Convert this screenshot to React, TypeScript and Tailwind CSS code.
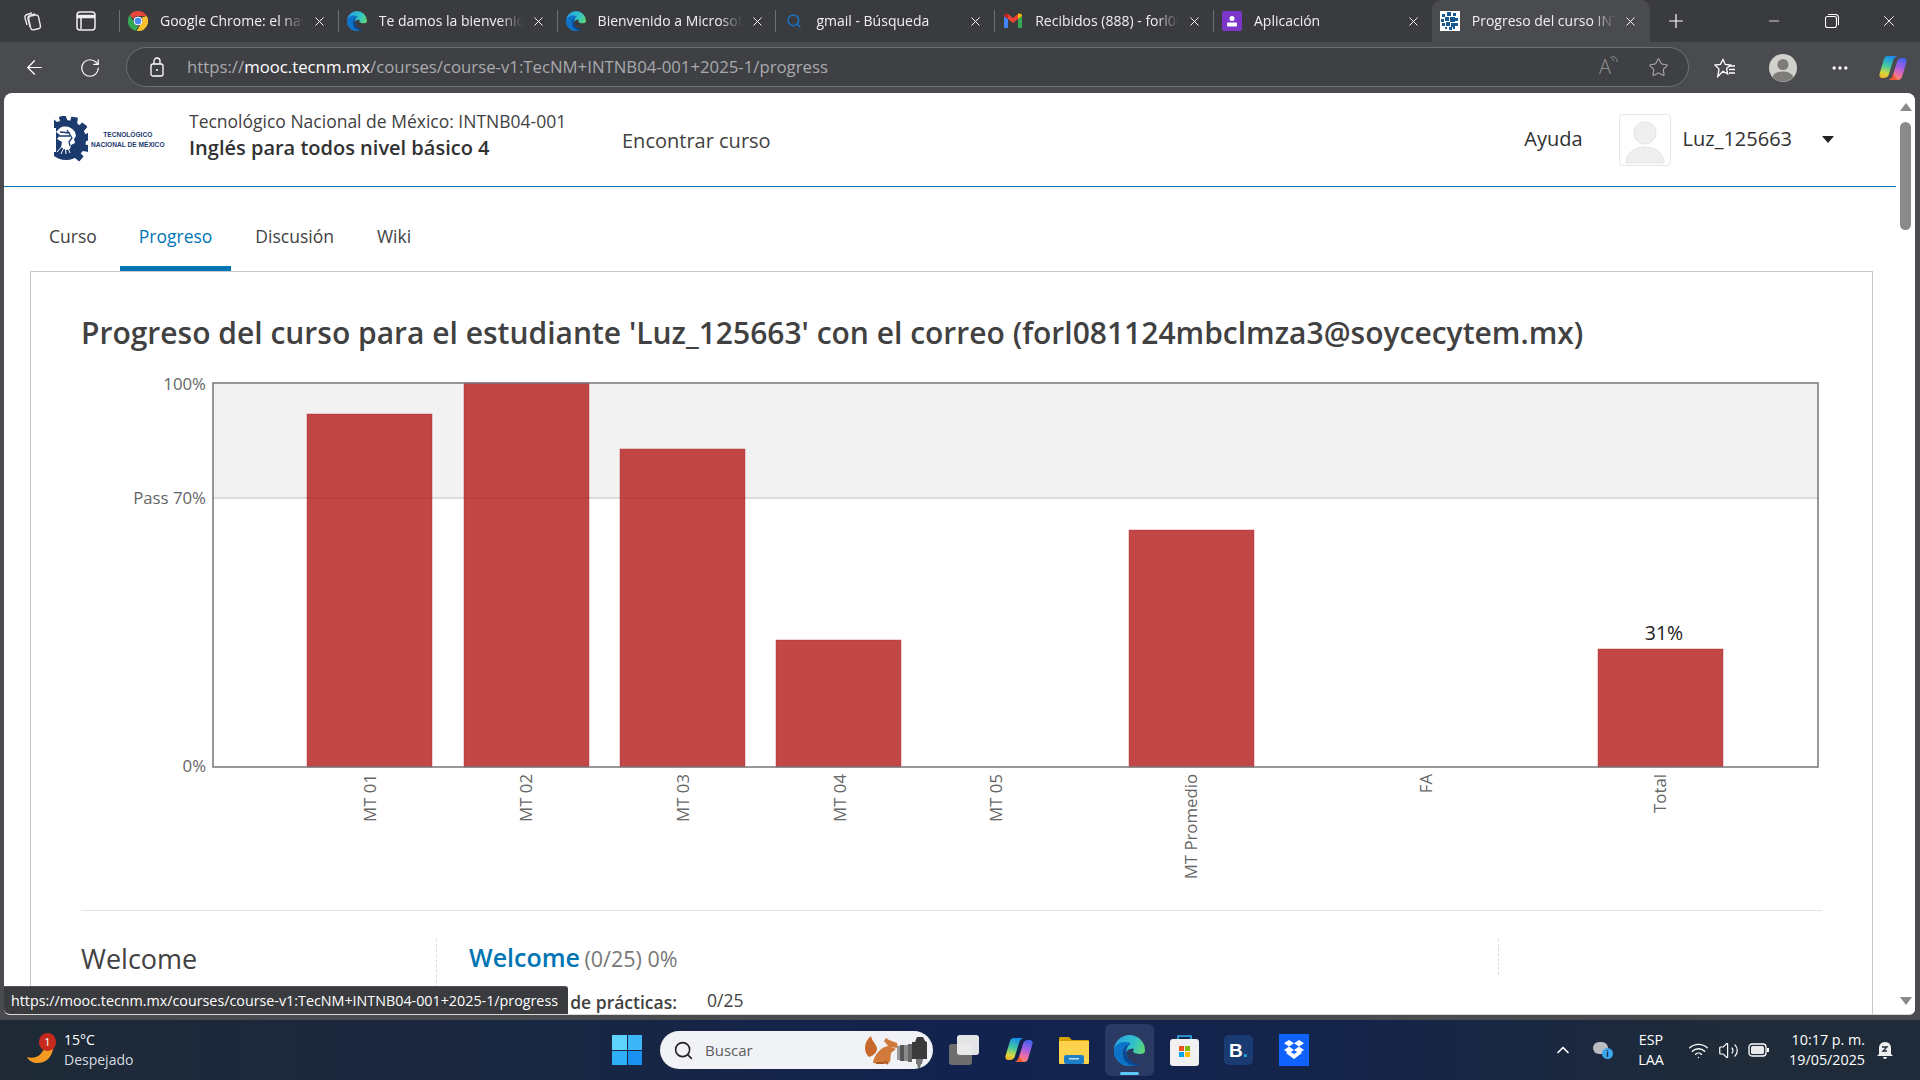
import React from "react";
import { X, Plus, Minus, ArrowLeft, RotateCw, Search, ChevronUp, Wifi, Volume2, Ellipsis, Star } from "lucide-react";

const seg = "font-['Open_Sans','Noto_Sans',sans-serif]";

function ChromeIcon() {
  return (
    <svg width="20" height="20" viewBox="0 0 20 20" className="shrink-0">
      <path d="M10 0a10 10 0 0 1 8.700 5H10a5 5 0 0 0-4.600 3L1.800 4A10 10 0 0 1 10 0z" fill="#e8453c" />
      <path d="M1.800 4l4.400 7.400A5 5 0 0 0 10.500 15L7.800 19.800A10 10 0 0 1 1.800 4z" fill="#34a853" />
      <path d="M18.700 5A10 10 0 0 1 8.600 20l4.400-7.600A5 5 0 0 0 13.600 6.500L18.700 5z" fill="#fbc02d" />
      <circle cx="10" cy="10" r="4" fill="#4a8cf0" stroke="#fff" strokeWidth="1" />
    </svg>
  );
}
function EdgeIcon({ s = 20, bite = "#3a3b3f" }: { s?: number; bite?: string }) {
  return (
    <svg width={s} height={s} viewBox="0 0 24 24" className="shrink-0">
      <defs>
        <linearGradient id="eg" x1="0" y1="0.200" x2="1" y2="0.700">
          <stop offset="0" stopColor="#2a9fe6" />
          <stop offset="0.550" stopColor="#32c3c8" />
          <stop offset="1" stopColor="#6bdc5c" />
        </linearGradient>
      </defs>
      <circle cx="12" cy="12" r="12" fill="url(#eg)" />
      <path d="M24 12.500c0 1-1 2-3.500 2.200-2 .1-4.500-.2-5.500-1.500-.6-.8 0-1.600.6-2.300-2.600-1-6.600.4-6.600 4.600 0 4 4 8.500 10 8.500l5-6z" fill={bite} />
      <path d="M0 12C1 6 8 4 13 6.500c-3 .5-6.500 3-6.500 8 0 4 3 8 8 9-1 .3-2 .5-3 .5C5 24 0 18.500 0 12z" fill="#0d73c9" />
      <path d="M6.500 14.500c0-5 3.500-7.500 6.500-8-2.500 1.500-3.500 4-3.500 6.500 0 5 4 9.500 10 9.800-1.500.8-3 1.200-5 1-5-1-8-5.300-8-9.300z" fill="#0a4a9a" />
    </svg>
  );
}
function GmailIcon() {
  return (
    <svg width="20" height="20" viewBox="0 0 20 20" className="shrink-0">
      <path d="M1 17V5l4 3v9H2a1 1 0 0 1-1-1z" fill="#4285f4" />
      <path d="M19 17V5l-4 3v9h3a1 1 0 0 0 1-1z" fill="#34a853" />
      <path d="M5 8V3l5 4 5-4v5l-5 4z" fill="#ea4335" />
      <path d="M1 5c0-2 2-3 4-2v5z" fill="#c5221f" />
      <path d="M19 5c0-2-2-3-4-2v5z" fill="#fbbc04" />
    </svg>
  );
}
function AppIcon() {
  return (
    <svg width="20" height="20" viewBox="0 0 20 20" className="shrink-0">
      <rect width="20" height="20" rx="2" fill="#7b35c9" />
      <circle cx="10" cy="7.500" r="2.500" fill="#fff" />
      <rect x="5" y="11.500" width="10" height="4" rx="1" fill="#fff" />
    </svg>
  );
}
function TecIcon() {
  const dots = [[3,4,3],[8,2,4],[14,3,3],[2,9,3],[6,7,4],[11,7,5],[16,8,3],[3,13,3],[7,12,4],[12,13,4],[16,13,3],[6,17,2],[10,17,3],[14,17,2]];
  return (
    <svg width="20" height="20" viewBox="0 0 20 20" className="shrink-0">
      <rect width="20" height="20" fill="#fff" />
      {dots.map((d, i) => <rect key={i} x={d[0]-1} y={d[1]-1} width={d[2]} height={d[2]} fill="#16588f" />)}
    </svg>
  );
}
function CopilotIcon({ s = 28 }: { s?: number }) {
  return (
    <svg width={s} height={s} viewBox="0 0 28 28" className="shrink-0">
      <defs>
        <linearGradient id="cp1" x1="0.500" y1="0" x2="0.300" y2="1">
          <stop offset="0" stopColor="#1b8fea" /><stop offset="0.450" stopColor="#45c8a0" /><stop offset="0.800" stopColor="#d8d83a" /><stop offset="1" stopColor="#f3b02a" />
        </linearGradient>
        <linearGradient id="cp2" x1="0.700" y1="0" x2="0.400" y2="1">
          <stop offset="0" stopColor="#3f62ec" /><stop offset="0.400" stopColor="#a45ee6" /><stop offset="0.750" stopColor="#ee6fa0" /><stop offset="1" stopColor="#f68a5a" />
        </linearGradient>
      </defs>
      <path d="M9 2h9c-2.500 1-3.500 3-4 5l-4 13c-.7 2.500-2.500 4-5 4H3c-2 0-3-2-2.500-4L5 5c.5-2 2-3 4-3z" fill="url(#cp1)" />
      <path d="M19 26h-9c2.500-1 3.500-3 4-5l4-13c.7-2.500 2.500-4 5-4h2c2 0 3 2 2.500 4L23 23c-.5 2-2 3-4 3z" fill="url(#cp2)" />
      <path d="M10 26c2.500-1 3.500-3 4.500-6.500 1 3 2.500 5.500 4.500 6.500z" fill="#ef5a35" />
    </svg>
  );
}

const tabs = [
  { icon: <ChromeIcon />, text: "Google Chrome: el navegador" },
  { icon: <EdgeIcon />, text: "Te damos la bienvenida a" },
  { icon: <EdgeIcon />, text: "Bienvenido a Microsoft Edge" },
  { icon: <Search size={16} strokeWidth={2.200} className="text-[#1a73c7] shrink-0" />, text: "gmail - Búsqueda" },
  { icon: <GmailIcon />, text: "Recibidos (888) - forl081124" },
  { icon: <AppIcon />, text: "Aplicación" },
];

function TabStrip() {
  return (
    <div className={`h-[42px] bg-[#3a3b3f] flex items-center shrink-0 text-white ${seg}`}>
      <div className="w-[119px] shrink-0 flex items-center">
        <svg width="22" height="22" viewBox="0 0 22 22" fill="none" stroke="#e6e6e6" strokeWidth="1.400" className="ml-[22px]">
          <rect x="7.500" y="5.500" width="10" height="14" rx="2.500" transform="rotate(-12 12 12)" />
          <path d="M5 15 3 8c-.5-2 .5-3 2-3.500L10 3M8 17 6 9c-.5-2 .5-3 2-3.500l5-1.500" />
        </svg>
        <svg width="20" height="20" viewBox="0 0 20 20" fill="none" stroke="#eee" strokeWidth="1.500" className="ml-[32px]">
          <rect x="1" y="1" width="18" height="18" rx="3" />
          <path d="M1 5.500h18" strokeWidth="3.500" />
          <path d="M5 6v12" />
        </svg>
      </div>
      {tabs.map((t, i) => (
        <div key={i} className="w-[218.800px] h-[42px] shrink-0 flex items-center">
          <div className="w-px h-[22px] bg-[#6e6f73] shrink-0" />
          <div className="ml-[8px] w-[20px] flex justify-center shrink-0">{t.icon}</div>
          <div className="ml-[12px] w-[144px] -mt-[1px] whitespace-nowrap overflow-hidden text-[14px] text-[#f0f0f0] [mask-image:linear-gradient(to_right,black_84%,transparent)]">{t.text}</div>
          <X size={15} strokeWidth={1.500} className="ml-[8px] text-white shrink-0" />
        </div>
      ))}
      <div className="w-[218px] h-[42px] shrink-0 flex items-center bg-[#4a4b4f] rounded-t-[9px]">
        <div className="ml-[8px] w-[20px] shrink-0"><TecIcon /></div>
        <div className="ml-[12px] w-[144px] -mt-[1px] whitespace-nowrap overflow-hidden text-[14px] text-[#f0f0f0] [mask-image:linear-gradient(to_right,black_84%,transparent)]">Progreso del curso INTNB04</div>
        <X size={15} strokeWidth={1.500} className="ml-[7px] text-white shrink-0" />
      </div>
      <Plus size={22} strokeWidth={1.300} className="ml-[15px] text-white shrink-0" />
      <Minus size={16} strokeWidth={1.200} className="ml-[79px] text-white shrink-0" />
      <svg width="14" height="14" viewBox="0 0 14 14" fill="none" stroke="#fff" strokeWidth="1.100" className="ml-[43px] shrink-0">
        <rect x="0.500" y="2.500" width="11" height="11" rx="2" />
        <path d="M3 .500h7.500a3 3 0 0 1 3 3V11" />
      </svg>
      <X size={18} strokeWidth={1.200} className="ml-[41px] text-white shrink-0" />
    </div>
  );
}

function Toolbar() {
  return (
    <div className={`h-[51px] bg-[#4a4b4f] flex items-center shrink-0 ${seg}`}>
      <ArrowLeft size={23} strokeWidth={1.300} className="ml-[23px] text-white shrink-0" />
      <RotateCw size={22} strokeWidth={1.300} className="ml-[33px] text-white shrink-0" />
      <div className="ml-[25px] w-[1563px] h-[40px] -mt-[1px] rounded-full border border-[#6f7074] bg-[#3f4044] flex items-center shrink-0">
        <svg width="14" height="20" viewBox="0 0 14 20" fill="none" stroke="#fff" strokeWidth="1.300" className="ml-[23px] shrink-0">
          <rect x="1" y="7" width="12" height="12" rx="2" />
          <path d="M4 7V4a3 3 0 0 1 6 0v3" />
          <circle cx="7" cy="13" r="1" fill="#fff" stroke="none" />
        </svg>
        <div className="ml-[23px] text-[16.750px] whitespace-nowrap text-[#a9aaad]">
          https://<span className="text-white">mooc.tecnm.mx</span>/courses/course-v1:TecNM+INTNB04-001+2025-1/progress
        </div>
        <div className="flex-1" />
        <div className="flex items-start shrink-0">
          <span className="text-[#8f9093] text-[20px] font-light leading-none">A</span>
          <svg width="9" height="10" viewBox="0 0 9 10" fill="none" stroke="#8f9093" strokeWidth="1" className="-ml-[2px] -mt-[1px]">
            <path d="M1 1c2 .5 3 2 3.500 4M3 0c3 .5 5 3 5.500 6" />
          </svg>
        </div>
        <Star size={21} strokeWidth={1.300} className="ml-[30px] mr-[19px] text-[#a0a1a4] shrink-0" />
      </div>
      <svg width="22" height="20" viewBox="0 0 22 20" fill="none" stroke="#fff" strokeWidth="1.300" className="ml-[25px] shrink-0">
        <path d="M9 1.500l2.300 5 5.200.5-3.900 3.600L13.700 16 9 13.200 3.800 18.500l1.200-7.400L1 7l5.400-.6z" />
        <path d="M15 8h6M15 11.500h6M15 15h6" />
      </svg>
      <svg width="28" height="28" viewBox="0 0 28 28" className="ml-[33px] shrink-0">
        <circle cx="14" cy="14" r="14" fill="#d2d0cb" />
        <circle cx="14" cy="10.500" r="5.500" fill="#7d7c78" />
        <path d="M3.500 23a11 8 0 0 1 21 0 14 14 0 0 1-21 0z" fill="#7d7c78" />
      </svg>
      <Ellipsis size={20} strokeWidth={2} className="ml-[33px] text-white shrink-0" />
      <div className="ml-[29px] shrink-0"><CopilotIcon /></div>
    </div>
  );
}

function Logo() {
  const teeth = [-70, -40, -10, 20, 50, 80, 110];
  return (
    <div className="flex items-center w-[117px] shrink-0">
      <svg width="34" height="48" viewBox="0 0 34 48" className="shrink-0">
        <g fill="#1b3a6e">
          {teeth.map((a) => (
            <rect key={a} x="13" y="0" width="7" height="8" rx="1" transform={`rotate(${a + 20} 12 24)`} />
          ))}
          <circle cx="12" cy="24" r="20" />
        </g>
        <path d="M2 12h-4v24h4z" fill="#fff" />
        <path d="M6 12c5-3 12-1 15 4l1 4-2 3 1 4-4 2-1 4-4 1-5-3 1-5-5-3 3-4-4-3z" fill="#fff" />
        <path d="M6 16l10 1M5 20l11 0M13 14l5 8-3 4 1 4" fill="none" stroke="#1b3a6e" strokeWidth="1.300" />
        <path d="M3 36l8-9 1 11M7 38l5-11 4 10" fill="none" stroke="#fff" strokeWidth="1" />
      </svg>
      <div className="ml-[3px] text-[6.600px] leading-[10px] font-bold text-[#1b3a6e] text-center whitespace-nowrap font-['Liberation_Sans',sans-serif]">
        <div>TECNOLÓGICO</div>
        <div>NACIONAL DE MÉXICO</div>
      </div>
    </div>
  );
}

function CourseHeader() {
  return (
    <div className="h-[94px] flex items-center border-b border-[#0075b4] shrink-0 shadow-[0_2px_6px_rgba(0,0,0,0.06)]">
      <div className="ml-[50px]"><Logo /></div>
      <div className="ml-[18px] w-[433px] shrink-0 -mt-[10px]">
        <div className="text-[17.500px] leading-[26px] text-[#414141] whitespace-nowrap">Tecnológico Nacional de México: INTNB04-001</div>
        <div className="text-[20px] leading-[27px] font-semibold text-[#313131] whitespace-nowrap">Inglés para todos nivel básico 4</div>
      </div>
      <div className="text-[20px] text-[#414141] whitespace-nowrap mt-[3px]">Encontrar curso</div>
      <div className="flex-1" />
      <div className="text-[20px] text-[#313131] -mt-[1px]">Ayuda</div>
      <div className="ml-[36px] w-[52px] h-[52px] border border-[#e6e6e6] rounded-[4px] overflow-hidden shrink-0 flex justify-center">
        <svg width="42" height="46" viewBox="0 0 42 46" className="mt-[6px]">
          <circle cx="21" cy="12" r="11" fill="#efefef" stroke="#e4e4e4" />
          <path d="M2 42c0-10 9-16 19-16s19 6 19 16z" fill="#efefef" stroke="#e4e4e4" />
        </svg>
      </div>
      <div className="ml-[12px] text-[20px] text-[#313131] -mt-[1px]">Luz_125663</div>
      <div className="ml-[30px] mr-[62px] w-0 h-0 border-x-[6px] border-x-transparent border-t-[7px] border-t-[#222]" />
    </div>
  );
}

function CourseTabs() {
  const items = ["Curso", "Progreso", "Discusión", "Wiki"];
  return (
    <div className="h-[84px] flex items-end pl-[26px] shrink-0">
      {items.map((t, i) => (
        <div key={t} className={`h-[64px] px-[19px] pt-[17px] text-[17.500px] leading-[24px] whitespace-nowrap border-b-[5px] ${i === 1 ? "text-[#0075b4] border-[#0075b4]" : "text-[#414141] border-transparent"} ${i === 0 ? "pr-[23px]" : ""} ${i === 2 ? "pr-[24px] pl-[24px]" : ""}`}>{t}</div>
      ))}
    </div>
  );
}

function Chart() {
  const bars = [
    [307, 414], [464, 383], [620, 449], [776, 640], [1129, 530], [1598, 649],
  ];
  const xl: [string, number][] = [
    ["MT 01", 370], ["MT 02", 526], ["MT 03", 683], ["MT 04", 840], ["MT 05", 996],
    ["MT Promedio", 1191], ["FA", 1426], ["Total", 1660],
  ];
  const font = "'Open Sans', sans-serif";
  return (
    <svg width="1760" height="520" viewBox="0 0 1760 520" className="block shrink-0">
      <g transform="translate(-81,-370)" fontFamily={font}>
        <rect x="213" y="383" width="1605" height="115" fill="#f2f2f2" />
        <line x1="213" y1="498" x2="1818" y2="498" stroke="#d2d2d2" strokeWidth="1.500" />
        {bars.map(([x, y]) => (
          <rect key={x} x={x} y={y} width="125" height={767 - y} fill="#b42020" fillOpacity="0.82" stroke="#b62323" strokeOpacity="0.4" />
        ))}
        <rect x="213" y="383" width="1605" height="384" fill="none" stroke="#777" strokeWidth="1.500" />
        <text x="206" y="390" textAnchor="end" fontSize="16.800" fill="#666">100%</text>
        <text x="206" y="504" textAnchor="end" fontSize="16.800" fill="#666">Pass 70%</text>
        <text x="206" y="772" textAnchor="end" fontSize="16.800" fill="#666">0%</text>
        <text x="1664" y="640" textAnchor="middle" fontSize="19.500" fill="#222">31%</text>
        {xl.map(([t, x]) => (
          <text key={t} transform={`translate(${x + 6},774) rotate(-90)`} textAnchor="end" fontSize="16.800" fill="#666">{t}</text>
        ))}
      </g>
    </svg>
  );
}

function Content() {
  return (
    <div className="ml-[26px] mr-[23px] border border-[#c8c8c8] border-b-0 flex-1 pl-[50px] pr-[50px] min-h-0 overflow-hidden">
      <h1 className="mt-[42px] h-[56px] text-[30px] leading-[38px] font-semibold text-[#414141] whitespace-nowrap">
        Progreso del curso para el estudiante 'Luz_125663' con el correo (forl081124mbclmza3@soycecytem.mx)
      </h1>
      <Chart />
      <div className="mt-[20px] border-t border-[#e4e4e4] w-[1741px]" />
      <div className="mt-[28px] flex w-[1741px]">
        <div className="w-[355px] shrink-0 text-[27px] leading-[40px] text-[#414141]">Welcome</div>
        <div className="w-[1063px] shrink-0 border-l border-dashed border-[#dcdcdc] h-[100px]">
          <div className="h-[36px] border-r border-dashed border-[#dcdcdc] pl-[32px] text-[25px] leading-[36px] font-semibold text-[#0075b4] whitespace-nowrap">
            Welcome <span className="text-[21.500px] font-normal text-[#777] -ml-[2px]">(0/25) 0%</span>
          </div>
          <div className="pl-[32px] mt-[15px] flex text-[17.500px] leading-[24px] text-[#414141] whitespace-nowrap">
            <span className="font-semibold w-[208px] text-right">de prácticas:</span>
            <span className="ml-[30px] -mt-[2px]">0/25</span>
          </div>
        </div>
      </div>
    </div>
  );
}

function Scrollbar() {
  return (
    <div className="w-[19px] shrink-0 bg-white flex flex-col items-center">
      <div className="mt-[10px] w-0 h-0 border-x-[6px] border-x-transparent border-b-[8px] border-b-[#8a8a8a]" />
      <div className="mt-[11px] w-[11px] h-[108px] rounded-full bg-[#8a8a8a]" />
      <div className="flex-1" />
      <div className="mb-[9px] w-0 h-0 border-x-[6px] border-x-transparent border-t-[8px] border-t-[#8a8a8a]" />
    </div>
  );
}

function Page() {
  return (
    <div className="h-[927px] bg-[#4a4b4f] pl-[4px] pr-[5px] pb-[5px] shrink-0">
      <div className="h-[922px] bg-white rounded-tl-[8px] rounded-tr-[8px] rounded-b-[6px] overflow-hidden flex relative font-['Open_Sans',sans-serif] border-b border-[#d8d8d8]">
        <div className="flex-1 min-w-0 flex flex-col">
          <CourseHeader />
          <CourseTabs />
          <Content />
        </div>
        <Scrollbar />
        <div className="absolute left-0 bottom-0 h-[28px] w-[564px] bg-[#3a3b3f] rounded-tr-[3px] text-white text-[14.300px] leading-[27px] pl-[7px] whitespace-nowrap border-t border-[#555]">
          https://mooc.tecnm.mx/courses/course-v1:TecNM+INTNB04-001+2025-1/progress
        </div>
      </div>
    </div>
  );
}

function Taskbar() {
  return (
    <div className={`h-[60px] flex items-center text-white bg-[linear-gradient(90deg,#1f2a36_0%,#1a2740_25%,#12234f_50%,#15244a_70%,#1f2b38_90%)] shrink-0 ${seg}`}>
      <div className="ml-[26px] w-[30px] h-[34px] relative shrink-0">
        <svg width="30" height="34" viewBox="0 0 30 34">
          <path d="M28 4c1 10-2 26-16 26-5 0-9-2-11-6 9 3 18-3 18-15 0-3 1-6 9-5z" fill="#f39a23" />
        </svg>
        <div className="absolute left-[13px] top-0 w-[17px] h-[18px] rounded-full bg-[#c42b1c] text-[11px] leading-[18px] text-center">1</div>
      </div>
      <div className="ml-[8px] w-[80px] text-[14px] leading-[20px] shrink-0 -mt-[1px]">
        <div>15°C</div>
        <div className="text-[#d8dce0]">Despejado</div>
      </div>
      <div className="ml-[468px] w-[30px] h-[30px] grid grid-cols-2 gap-[1px] shrink-0">
        <div className="bg-[#5fd3fa]" /><div className="bg-[#3cb6f7]" /><div className="bg-[#2fb0f6]" /><div className="bg-[#1a90f0]" />
      </div>
      <div className="ml-[18px] w-[273px] h-[38px] rounded-full bg-[#f1f2f5] flex items-center shrink-0">
        <Search size={21} strokeWidth={1.800} className="ml-[13px] text-[#222] shrink-0" />
        <span className="ml-[11px] text-[15px] text-[#5a5d60]">Buscar</span>
        <div className="flex-1" />
        <svg width="68" height="36" viewBox="0 0 68 36" className="mr-[2px] shrink-0">
          <path d="M6 25C0 20 1 9 8 4c1 5 5 8 6 12 0 4-2 7-8 9z" fill="#c8682a" />
          <path d="M10 30c2-8 8-15 15-16l8 3-5 4-1 9-5 2-12-1z" fill="#d17a3a" />
          <path d="M21 9l2-3 3 2 8 3 1 5-9-1z" fill="#cf7a3c" />
          <path d="M13 31h8M22 29l3 3" stroke="#a85a26" strokeWidth="2" />
          <rect x="34" y="14" width="3" height="14" fill="#999" />
          <rect x="37" y="13" width="4" height="16" fill="#555" />
          <rect x="41" y="13" width="4" height="16" fill="#8a8a8a" />
          <rect x="45" y="12" width="4" height="18" fill="#666" />
          <path d="M49 10h3l2-5h6l2 4 2 1v17H49z" fill="#3a3a3a" />
          <path d="M53 27h7l-1 5h-1l-1 4h-2l-1-4h-1z" fill="#777" />
        </svg>
      </div>
      <div className="ml-[16px] w-[30px] h-[30px] relative shrink-0">
        <div className="absolute left-0 bottom-0 w-[23px] h-[21px] rounded-[3px] bg-[#6e6e6e]" />
        <div className="absolute right-0 top-0 w-[22px] h-[20px] rounded-[3px] bg-[#efefef] opacity-95" />
      </div>
      <div className="ml-[26px] shrink-0"><CopilotIcon s={28} /></div>
      <svg width="30" height="30" viewBox="0 0 30 30" className="ml-[26px] shrink-0">
        <path d="M0 3a1 1 0 0 1 1-1h9l3 3h16a1 1 0 0 1 1 1v3H0z" fill="#d6a100" />
        <path d="M0 6h30v22a1 1 0 0 1-1 1H1a1 1 0 0 1-1-1z" fill="#fdd34e" />
        <rect x="5" y="20" width="20" height="9" rx="2" fill="#1e7fc9" />
        <rect x="10" y="23" width="10" height="1.500" fill="#bde0f5" />
      </svg>
      <div className="ml-[16px] w-[49px] h-[52px] rounded-[6px] bg-[#2a3a62] flex items-center justify-center shrink-0 relative">
        <EdgeIcon s={31} bite="#2a3a62" />
        <div className="absolute bottom-[1px] left-[15px] w-[19px] h-[3px] rounded-full bg-[#5cc8fa]" />
      </div>
      <svg width="29" height="32" viewBox="0 0 29 32" className="ml-[16px] shrink-0">
        <path d="M8 6V2h13v4" fill="none" stroke="#2fb4ee" strokeWidth="1.600" />
        <rect x="0" y="5" width="29" height="27" rx="3" fill="#f1f1f1" />
        <rect x="9" y="12" width="5" height="5" fill="#f25022" /><rect x="15" y="12" width="5" height="5" fill="#7fba00" />
        <rect x="9" y="18" width="5" height="5" fill="#00a4ef" /><rect x="15" y="18" width="5" height="5" fill="#ffb900" />
      </svg>
      <div className="ml-[25px] w-[29px] h-[30px] rounded-[5px] bg-[#1a3b72] flex items-center justify-center text-white text-[19px] font-bold leading-none shrink-0 font-['Liberation_Sans',sans-serif]">
        B<span className="text-[#22a7e0]">.</span>
      </div>
      <div className="ml-[26px] w-[30px] h-[32px] bg-[#0f62fe] flex items-center justify-center shrink-0">
        <svg width="22" height="20" viewBox="0 0 22 20" fill="#fff">
          <path d="M6 0l5 3.300-5 3.300-5-3.300zM16 0l5 3.300-5 3.300-5-3.300zM6 6.600l5 3.300-5 3.300-5-3.300zM16 6.600l5 3.300-5 3.300-5-3.300zM11 14l5-3 3 2-8 6-8-6 3-2z" />
        </svg>
      </div>
      <div className="flex-1" />
      <ChevronUp size={20} strokeWidth={2} className="text-white shrink-0" />
      <div className="ml-[20px] w-[20px] h-[18px] relative shrink-0">
        <div className="absolute left-0 top-[1px] w-[15px] h-[12px] rounded-full bg-[#b9bcc0]" />
        <div className="absolute right-0 bottom-0 w-[11px] h-[11px] rounded-full bg-[#3ea6ee] text-[8px] leading-[11px] font-bold text-center text-[#123]">i</div>
      </div>
      <div className="ml-[18px] w-[40px] text-center text-[14.300px] leading-[20px] text-white shrink-0">
        <div>ESP</div><div>LAA</div>
      </div>
      <Wifi size={21} strokeWidth={1.600} className="ml-[17px] text-white shrink-0" />
      <Volume2 size={21} strokeWidth={1.400} className="ml-[9px] text-white shrink-0" />
      <svg width="21" height="14" viewBox="0 0 21 14" fill="none" stroke="#fff" strokeWidth="1.300" className="ml-[9px] shrink-0">
        <rect x="1" y="1" width="17" height="12" rx="3" />
        <rect x="3" y="3" width="13" height="8" rx="1.500" fill="#fff" stroke="none" opacity="0.900" />
        <rect x="19" y="5" width="2" height="4" fill="#fff" stroke="none" />
      </svg>
      <div className="ml-[20px] w-[76px] text-right text-[14.300px] leading-[20px] text-white whitespace-nowrap shrink-0">
        <div>10:17 p. m.</div><div>19/05/2025</div>
      </div>
      <svg width="18" height="20" viewBox="0 0 18 20" className="ml-[11px] mr-[26px] shrink-0" fill="#eee">
        <path d="M3 14V8c0-3 2-6 6-6s6 3 6 6v6l2 2H1zM7 17h4a2 2 0 0 1-4 0z" />
        <path d="M6 7h5l-4 4h4" fill="none" stroke="#1f2b38" strokeWidth="1.300" />
      </svg>
    </div>
  );
}

export default function App() {
  return (
    <div className="w-[1920px] h-[1080px] overflow-hidden flex flex-col bg-[#3a3b3f]">
      <TabStrip />
      <Toolbar />
      <Page />
      <Taskbar />
    </div>
  );
}
